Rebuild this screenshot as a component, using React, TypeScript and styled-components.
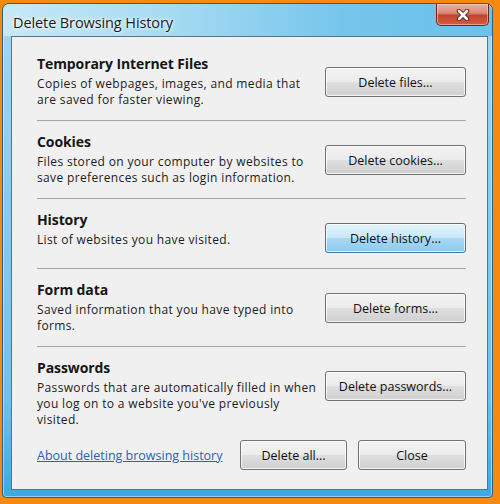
import React from "react";
import styled, { createGlobalStyle } from "styled-components";

const GlobalStyle = createGlobalStyle`
  html, body {
    margin: 0;
    padding: 0;
    width: 500px;
    height: 504px;
    overflow: hidden;
    background: #f7890f;
  }
`;

const PageEl = styled.div`
  width: 500px;
  height: 504px;
  box-sizing: border-box;
  padding: 3px 7px 6px 2px;
  display: flex;
  font-family: "Open Sans", "Noto Sans", sans-serif;
`;

const WindowEl = styled.div`
  flex: 1;
  display: flex;
  flex-direction: column;
  border: 1px solid #2f5f7e;
  border-radius: 7px 7px 4px 4px;
  background: linear-gradient(180deg, #9fd8f2 0%, #84cdef 40%, #6cc2ec 80%, #38abe2 100%);
  padding: 0 4px 7px 8px;
  box-shadow: inset 0 0 0 1px rgba(255, 255, 255, 0.45);
`;

const TitleBarEl = styled.div`
  height: 32px;
  display: flex;
  align-items: flex-start;
  justify-content: space-between;
  margin: 0 -4px 0 -8px;
  padding: 0 3px 0 10px;
  border-radius: 7px 7px 0 0;
  background: linear-gradient(90deg, #c6e8f7 0%, #a5daf2 35%, #74c5eb 70%, #6cc1ea 100%);
`;

const TitleEl = styled.div`
  margin-top: 9px;
  font-size: 14.5px;
  color: #1b1b1b;
  text-shadow: 0 0 6px #ffffff, 0 0 3px #ffffff;
  letter-spacing: -0.1px;
`;

const CloseBtnEl = styled.div`
  width: 51px;
  height: 21px;
  display: flex;
  align-items: center;
  justify-content: center;
  border: 1px solid #6d2619;
  border-top: none;
  border-radius: 0 0 5px 5px;
  background: linear-gradient(180deg, #eab0a3 0%, #d98b79 42%, #c2452d 55%, #d45c40 100%);
  box-shadow: inset 0 0 0 1px rgba(255, 220, 210, 0.5);
`;

const PanelEl = styled.div`
  flex: 1;
  min-height: 0;
  display: flex;
  flex-direction: column;
  background: #f0f0f0;
  border: 1px solid #5b7386;
  padding: 6px 21px 0 25px;
  color: #1c1c1c;
`;

const SectionEl = styled.div<{ $last?: boolean }>`
  display: flex;
  align-items: flex-start;
  justify-content: space-between;
  padding: 12px 0 ${(p) => (p.$last ? 4 : 12)}px;
  border-bottom: ${(p) => (p.$last ? "none" : "1px solid #a6a6a6")};
`;

const TextColEl = styled.div`
  display: flex;
  flex-direction: column;
`;

const HeadingEl = styled.div`
  font-weight: 700;
  font-size: 14px;
  line-height: 18px;
  margin-bottom: 3px;
  color: #161616;
  letter-spacing: -0.1px;
`;

const DescEl = styled.div`
  font-size: 12px;
  line-height: 16px;
  letter-spacing: 0.35px;
  white-space: nowrap;
`;

const ButtonEl = styled.button<{ $hot?: boolean; $w?: number }>`
  width: ${(p) => p.$w ?? 141}px;
  height: 30px;
  margin: 12px 0 3px;
  flex-shrink: 0;
  font-family: inherit;
  font-size: 12.5px;
  color: #111;
  border-radius: 3px;
  border: 1px solid ${(p) => (p.$hot ? "#3a7bae" : "#727272")};
  background: ${(p) =>
    p.$hot
      ? "linear-gradient(180deg, #e4f4fc 0%, #c9e8f9 48%, #a9d8f4 52%, #8acaef 100%)"
      : "linear-gradient(180deg, #f3f3f3 0%, #ececec 48%, #dedede 52%, #d0d0d0 100%)"};
  box-shadow: inset 0 0 0 1px rgba(255, 255, 255, 0.75);
  padding: 0;
`;

const FooterEl = styled.div`
  margin-top: auto;
  display: flex;
  align-items: center;
  padding-bottom: 19px;
  gap: 11px;
`;

const LinkEl = styled.a`
  font-size: 12.5px;
  color: #2a62b6;
  text-decoration: underline;
  margin-right: auto;
  cursor: pointer;
`;

const FooterButtonEl = styled(ButtonEl)`
  margin: 0;
  height: 30px;
`;

const sections = [
  {
    title: "Temporary Internet Files",
    lines: ["Copies of webpages, images, and media that", "are saved for faster viewing."],
    button: "Delete files...",
  },
  {
    title: "Cookies",
    lines: ["Files stored on your computer by websites to", "save preferences such as login information."],
    button: "Delete cookies...",
  },
  {
    title: "History",
    lines: ["List of websites you have visited."],
    button: "Delete history...",
    hot: true,
  },
  {
    title: "Form data",
    lines: ["Saved information that you have typed into", "forms."],
    button: "Delete forms...",
  },
  {
    title: "Passwords",
    lines: [
      "Passwords that are automatically filled in when",
      "you log on to a website you've previously",
      "visited.",
    ],
    button: "Delete passwords...",
  },
];

function CloseGlyph() {
  return (
    <svg width="14" height="12" viewBox="0 0 14 12">
      <path d="M3 2 L11 10 M11 2 L3 10" stroke="#5a1b10" strokeWidth="4.5" strokeLinecap="round" />
      <path d="M3 2 L11 10 M11 2 L3 10" stroke="#ffffff" strokeWidth="2.6" strokeLinecap="round" />
    </svg>
  );
}

export default function App() {
  return (
    <>
      <GlobalStyle />
      <PageEl>
        <WindowEl>
          <TitleBarEl>
            <TitleEl>Delete Browsing History</TitleEl>
            <CloseBtnEl>
              <CloseGlyph />
            </CloseBtnEl>
          </TitleBarEl>
          <PanelEl>
            {sections.map((s, i) => (
              <SectionEl key={s.title} $last={i === sections.length - 1}>
                <TextColEl>
                  <HeadingEl>{s.title}</HeadingEl>
                  {s.lines.map((l) => (
                    <DescEl key={l}>{l}</DescEl>
                  ))}
                </TextColEl>
                <ButtonEl $hot={s.hot}>{s.button}</ButtonEl>
              </SectionEl>
            ))}
            <FooterEl>
              <LinkEl>About deleting browsing history</LinkEl>
              <FooterButtonEl $w={107}>Delete all...</FooterButtonEl>
              <FooterButtonEl $w={108}>Close</FooterButtonEl>
            </FooterEl>
          </PanelEl>
        </WindowEl>
      </PageEl>
    </>
  );
}
